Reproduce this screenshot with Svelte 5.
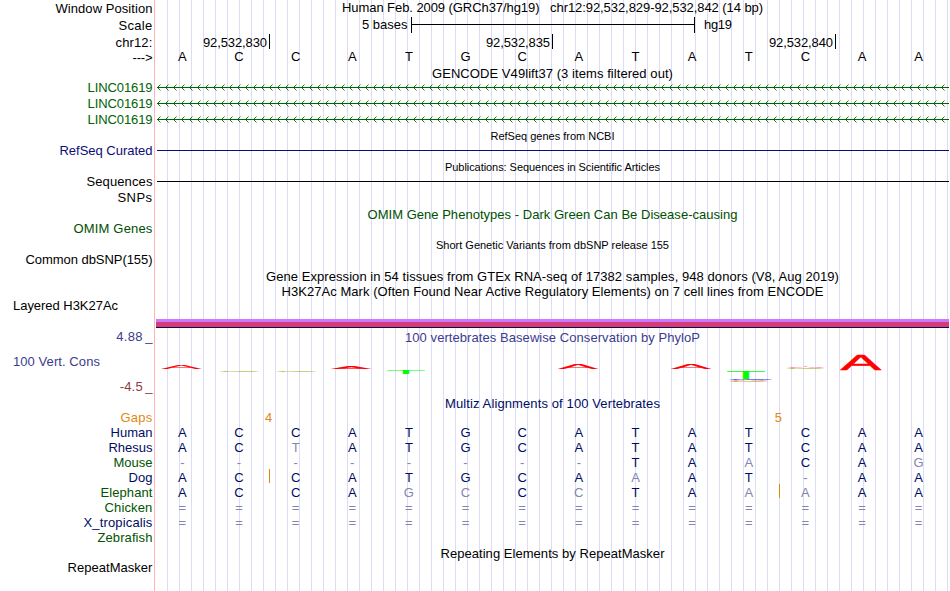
<script>
  const GRID_LEFT = 155;
  const gridLines = Array.from({ length: 66 }, (_, i) => 167 + i * 12 - GRID_LEFT);
  const arrows = Array.from({ length: 99 }, (_, i) => 2 + i * 8);

  // Each row: h = height, dy / ldy = baseline nudge, w / lw = set text width
  const rows = [
    { h: 16, label: 'Window Position', lw: 96, ldy: 1, title: 'Human Feb. 2009 (GRCh37/hg19)\u00a0\u00a0 chr12:92,532,829-92,532,842 (14 bp)', w: 420 },
    { h: 18, label: 'Scale', lw: 33, ldy: 1, kind: 'scale' },
    { h: 16, label: 'chr12:', lw: 36, ldy: 1, kind: 'ruler' },
    { h: 14, label: '--->', lw: 19, ldy: 1, kind: 'bases', seq: 'ACCATGCATATCAA' },
    { h: 17, title: 'GENCODE V49lift37 (3 items filtered out)', w: 240, dy: 1 },
    { h: 14, label: 'LINC01619', lw: 64, color: '#006400', kind: 'gene' },
    { h: 18, label: 'LINC01619', lw: 64, color: '#006400', kind: 'gene' },
    { h: 14, label: 'LINC01619', lw: 64, color: '#006400', kind: 'gene' },
    { h: 17, title: 'RefSeq genes from NCBI', w: 123, small: true, dy: 1 },
    { h: 13, label: 'RefSeq Curated', lw: 92, color: '#0c0c78', kind: 'line' },
    { h: 18, title: 'Publications: Sequences in Scientific Articles', w: 214, small: true, dy: 1 },
    { h: 13, label: 'Sequences', lw: 65, color: '#000', kind: 'line' },
    { h: 18, label: 'SNPs', lw: 34, ldy: 1 },
    { h: 16, title: 'OMIM Gene Phenotypes - Dark Green Can Be Disease-causing', w: 369, color: '#005000', dy: 1 },
    { h: 14, label: 'OMIM Genes', lw: 78, color: '#005000' },
    { h: 18, title: 'Short Genetic Variants from dbSNP release 155', w: 232, small: true },
    { h: 13, label: 'Common dbSNP(155)', lw: 126, ldy: -1 },
    { h: 18, title: 'Gene Expression in 54 tissues from GTEx RNA-seq of 17382 samples, 948 donors (V8, Aug 2019)', w: 572, dy: 1 },
    { h: 14, title: 'H3K27Ac Mark (Often Found Near Active Regulatory Elements) on 7 cell lines from ENCODE', w: 541 },
    { h: 14, label: 'Layered H3K27Ac', lw: 104, left: true },
    { h: 15, kind: 'band' },
    { h: 68, kind: 'cons' },
    { h: 15, title: 'Multiz Alignments of 100 Vertebrates', w: 214, color: '#000c64' },
    { h: 14, label: 'Gaps', lw: 31, color: '#e08a10', kind: 'gaps' },
    { h: 15, label: 'Human', lw: 41, color: '#000c64', kind: 'bases', seq: 'ACCATGCATATCAA', dim: '' },
    { h: 15, label: 'Rhesus', lw: 43, color: '#000c64', kind: 'bases', seq: 'ACTATGCATATCAA', dim: '2' },
    { h: 15, label: 'Mouse', lw: 38, color: '#005400', kind: 'bases', seq: '--------TAACAG', dim: '0,1,2,3,4,5,6,7,10,13' },
    { h: 15, label: 'Dog', lw: 23, color: '#000c64', kind: 'bases', seq: 'ACCATGCAAAT-AA', dim: '8,11', insert: 2 },
    { h: 15, label: 'Elephant', lw: 51, color: '#005400', kind: 'bases', seq: 'ACCAGCCCTAAAAA', dim: '4,5,7,10,11', insert: 11 },
    { h: 15, label: 'Chicken', lw: 47, color: '#005400', kind: 'bases', seq: '==============', dim: '0,1,2,3,4,5,6,7,8,9,10,11,12,13' },
    { h: 15, label: 'X_tropicalis', lw: 68, color: '#000c64', kind: 'bases', seq: '==============', dim: '0,1,2,3,4,5,6,7,8,9,10,11,12,13' },
    { h: 15, label: 'Zebrafish', lw: 54, color: '#005400' },
    { h: 17, title: 'Repeating Elements by RepeatMasker', w: 223 },
    { h: 12, label: 'RepeatMasker', lw: 84 }
  ];

  const ticks = [
    { x: 269, text: '92,532,830' },
    { x: 552, text: '92,532,835' },
    { x: 835, text: '92,532,840' }
  ];

  // Sequence-logo letters: box x, y, w, h in track coordinates
  const logo = [
    { c: 'A', x: 161.3, y: 365.2, w: 40, h: 3.6, fill: '#f00' },
    { c: 'C', x: 220, y: 370.3, w: 39.5, h: 1.4, fill: '#a8a820' },
    { c: 'C', x: 277, y: 370.3, w: 39.5, h: 1.4, fill: '#a8a820' },
    { c: 'A', x: 331, y: 366.2, w: 40, h: 2.6, fill: '#f00' },
    { c: 'T', x: 387, y: 370.2, w: 38, h: 3.8, fill: '#0f0' },
    { c: 'A', x: 558, y: 364.2, w: 40, h: 4.6, fill: '#f00' },
    { c: 'A', x: 671, y: 364.2, w: 40, h: 4.6, fill: '#f00' },
    { c: 'T', x: 727, y: 371, w: 38, h: 8, fill: '#0f0' },
    { c: 'G', x: 730, y: 379.1, w: 42, h: 0.7, fill: '#00f' },
    { c: 'A', x: 730, y: 380, w: 38, h: 0.8, fill: '#f00' },
    { c: 'C', x: 730, y: 381, w: 38, h: 0.5, fill: '#a8a820' },
    { c: 'A', x: 787, y: 367, w: 38, h: 0.8, fill: '#f00' },
    { c: 'C', x: 787, y: 368, w: 38, h: 0.6, fill: '#a8a820' },
    { c: 'A', x: 840.6, y: 354.2, w: 40.4, h: 15.6, fill: '#f00', bold: true }
  ];
  // Ink box of each letter in em units: left bearing, ink width
  const ink = { A: [0.002, 0.663], C: [0.05, 0.63], T: [0.022, 0.567], G: [0.05, 0.66] };
  function place(l) {
    const sx = l.w / (ink[l.c][1] * 100);
    const sy = l.h / 68.8;
    return `translate(${l.x - GRID_LEFT - ink[l.c][0] * 100 * sx} ${l.y - 328 + l.h}) scale(${sx} ${sy})`;
  }

  // Spreads letters evenly so the string fills its set width
  function fit(node, width) {
    if (!width) return;
    const natural = node.getBoundingClientRect().width;
    const step = (width + 1 - natural) / node.textContent.length;
    node.style.letterSpacing = `${step}px`;
  }
  const isDim = (row, i) => !!row.dim && row.dim.split(',').includes(String(i));
</script>

<main>
  <svg class="guides" width="794" height="591" shape-rendering="crispEdges" aria-hidden="true">
    {#each gridLines as x}
      <rect {x} y="0" width="1" height="591" fill="#dcdcf8" />
    {/each}
  </svg>
  {#each rows as row}
    <section style:height="{row.h}px" style:line-height="{row.h}px">
      {#if row.kind === 'cons'}
        <div class="label cons">
          <div class="limit up"><span use:fit={25.5}>4.88</span><span class="dash">_</span></div>
          <div class="name"><span use:fit={86}>100 Vert. Cons</span></div>
          <div class="limit low"><span use:fit={22}>-4.5</span><span class="dash">_</span></div>
        </div>
      {:else}
        <div class="label" class:left={row.left} style:color={row.color} style:top="{row.ldy ?? 0}px">
          {#if row.label}<span use:fit={row.lw}>{row.label}</span>{/if}
        </div>
      {/if}
      <div class="track" style:color={row.color}>
        {#if row.title}
          <h2 class:small={row.small} style:top="{row.dy ?? 0}px"><span use:fit={row.w}>{row.title}</span></h2>
        {:else if row.kind === 'scale'}
          <svg width="794" height="18">
            <path d="M256.5 1v16M256.5 8.5h283M539.5 1v16" stroke="#000" />
            <text x="207" y="13" textLength="45.5">5 bases</text>
            <text x="549" y="13" textLength="28">hg19</text>
          </svg>
        {:else if row.kind === 'ruler'}
          <svg width="794" height="16">
            {#each ticks as t}
              <rect x={t.x - GRID_LEFT} y="0" width="1" height="15" />
              <text x={t.x - GRID_LEFT - 66} y="13" textLength="64">{t.text}</text>
            {/each}
          </svg>
        {:else if row.kind === 'bases'}
          <div class="bases" class:aligned={row.dim !== undefined}>
            {#each row.seq.split('') as base, i}
              <span class:dim={isDim(row, i)} class:insert={row.insert === i}>{base}</span>
            {/each}
          </div>
        {:else if row.kind === 'gene'}
          <svg width="794" height={row.h} stroke="#006400" fill="none">
            <path d="M2 {row.h / 2 - 0.5}H794" />
            {#each arrows as x}
              <path d="M{x + 3.5} {row.h / 2 - 3.5}l-3 3l3 3" stroke-width="0.9" />
            {/each}
          </svg>
        {:else if row.kind === 'line'}
          <hr />
        {:else if row.kind === 'band'}
          <div class="band"></div>
        {:else if row.kind === 'cons'}
          <h2 class="over">
            <span use:fit={294}>100 vertebrates Basewise Conservation by PhyloP</span>
          </h2>
          <svg class="logo" width="794" height="68">
            {#each logo as l}
              <text
                transform={place(l)}
                fill={l.fill}
                stroke={l.c === 'T' ? 'none' : l.fill}
                stroke-width={l.bold ? 0.9 : 0.4}
              >{l.c}</text>
            {/each}
          </svg>
        {:else if row.kind === 'gaps'}
          <div class="bases gaps"><i></i><i>4</i><i></i><i></i><i></i><i></i><i></i><i></i><i></i><i></i><i>5</i></div>
        {/if}
      </div>
    </section>
  {/each}
</main>

<style>
  main {
    position: relative;
    width: 949px;
    height: 591px;
    overflow: hidden;
    background: #fff;
    color: #000;
    font: 13px 'Liberation Sans', Arial, sans-serif;
    white-space: nowrap;
  }
  .guides {
    position: absolute;
    left: 154px;
    top: 0;
    width: 794px;
    border-left: 1px solid #ffb4b4;
  }
  section {
    position: relative;
    display: flex;
  }
  .label {
    position: relative;
    box-sizing: border-box;
    flex: none;
    width: 155px;
    padding-right: 2.5px;
    text-align: right;
  }
  .label.left {
    padding-left: 13px;
    text-align: left;
  }
  .track {
    flex: none;
    width: 794px;
  }
  .track svg {
    display: block;
    overflow: visible;
  }
  h2 {
    position: relative;
    margin: 0;
    padding-left: 1px;
    font-size: 13px;
    font-weight: 400;
    text-align: center;
  }
  h2.small {
    font-size: 11px;
  }
  hr {
    height: 1px;
    margin: 6px 0 0 2px;
    border: 0;
    color: inherit;
    background: currentColor;
  }
  .bases {
    display: grid;
    grid-template-columns: repeat(14, 1fr);
    margin: 0 2px 0 -1px;
    text-align: center;
  }
  .aligned {
    color: #000c64;
  }
  .bases span {
    position: relative;
  }
  .bases .dim {
    color: #8484b2;
  }
  .insert::before {
    content: '';
    position: absolute;
    left: 2px;
    top: -1px;
    width: 1px;
    height: 14px;
    background: #e08a10;
  }
  .gaps i {
    margin-right: -5px;
    font-style: normal;
    text-align: right;
  }
  .band {
    height: 3px;
    margin: 6px 0 0 1px;
    padding-bottom: 5px;
    border-bottom: 1px solid #140050;
    background: linear-gradient(#ca78ff 3px, #d43c78 3px);
  }
  .cons {
    display: flex;
    flex-direction: column;
    padding-top: 1px;
    line-height: 16px;
    color: #3c3c8c;
  }
  .limit {
    display: flex;
    justify-content: flex-end;
  }
  .dash {
    margin-left: 2.5px;
  }
  .name {
    padding: 9px 0 9px 13px;
    text-align: left;
  }
  .low {
    color: #8c3c3c;
  }
  h2.over {
    height: 0;
    line-height: 19px;
    color: #3c3c8c;
  }
  .logo text {
    font-size: 100px;
    vector-effect: non-scaling-stroke;
  }
</style>
